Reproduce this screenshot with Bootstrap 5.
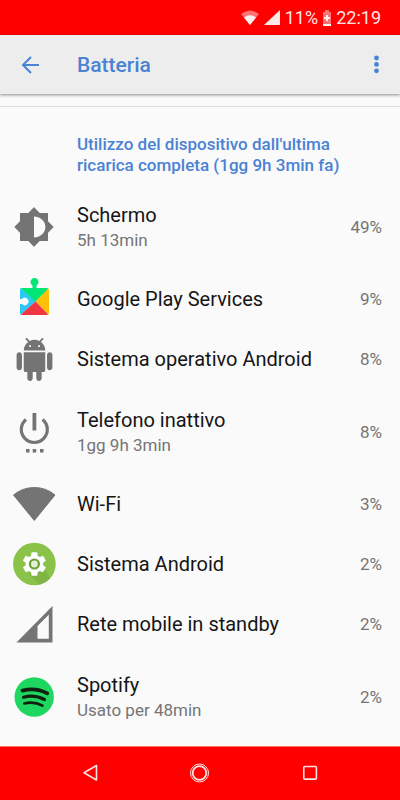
<!DOCTYPE html>
<html lang="it">
<head>
<meta charset="utf-8">
<meta name="viewport" content="width=device-width, initial-scale=1">
<title>Batteria</title>
<link href="https://cdn.jsdelivr.net/npm/bootstrap@5.3.0/dist/css/bootstrap.min.css" rel="stylesheet">
<style>
  body { font-family: Roboto, "Noto Sans", sans-serif; background: #fafafa; color: #151515; }
  svg { display: block; flex: none; }
  .status-bar { height: 35px; background: #f00; color: #ffe4e4; font-size: 18px; line-height: 20px; padding: 0 19px 0 0; }
  .app-bar { height: 59px; background: #ededed; padding: 1px 12px 0 18px; box-shadow: 0 1px 3px rgba(0,0,0,.45); color: #4a82d4; }
  .app-title { font-size: 21px; line-height: 28px; font-weight: 500; margin-left: 33px; }
  .icon-btn { padding: 0; border: 0; background: none; color: inherit; }
  .section-line { border-top: 1px solid #dcdcdc; margin-top: 12px; }
  .section-title { font-size: 17px; line-height: 21px; font-weight: 500; color: #4a82d4; padding: 27px 40px 8px 77px; }
  .usage-row { min-height: 60px; padding: 0 18px 0 12px; color: #151515; background: none; }
  .usage-row.two-line { min-height: 85px; }
  .icon-slot { width: 44px; height: 44px; margin-right: 21px; color: #747474; flex: none; }
  .usage-name { font-size: 20px; line-height: 26px; }
  .usage-info { font-size: 17px; line-height: 24px; color: #757575; }
  .usage-value { font-size: 17px; line-height: 22px; color: #757575; }
  .nav-keys { height: 54px; background: #f00; border-top: 1px solid #ff6b60; padding-bottom: 2px; color: #ffe0e0; gap: 66px; }
  .nav-key { width: 44px; height: 44px; }
</style>
<script src="https://cdn.jsdelivr.net/npm/bootstrap@5.3.0/dist/js/bootstrap.bundle.min.js" defer></script>
</head>
<body class="d-flex flex-column min-vh-100">

<div class="status-bar d-flex align-items-center justify-content-end">
  <svg width="18" height="15" viewBox="0 0 18 15" aria-hidden="true"><path d="M9 15L0 4Q9-3 18 4Z" fill="#ff7373"/><path d="M9 15L3 7.500Q9 3 15 7.500Z" fill="#fff0f0"/></svg>
  <svg class="ms-1" width="18" height="15" viewBox="0 0 18 15" aria-hidden="true"><path d="M1 15L17 0V15Z" fill="#ffe8e8"/></svg>
  <span class="ms-1">11%</span>
  <svg class="mx-1" width="10" height="16" viewBox="0 0 10 16" aria-hidden="true"><path d="M3 0H7V2H9V16H1V2H3Z" fill="#ff7070"/><path d="M1 14H9V16H1ZM4 5H6V7H8V9H6V11H4V9H2V7H4Z" fill="#fff0f0"/></svg>
  <span>22:19</span>
</div>

<header class="app-bar d-flex align-items-center">
  <button class="icon-btn" type="button" aria-label="Indietro">
    <svg width="26" height="26" viewBox="0 0 26 26" fill="none" stroke="currentColor" stroke-width="2"><path d="M21 13H5M13 5L5 13L13 21"/></svg>
  </button>
  <h1 class="app-title mb-0">Batteria</h1>
  <button class="icon-btn ms-auto" type="button" aria-label="Altre opzioni">
    <svg width="24" height="24" viewBox="0 0 24 24" fill="currentColor"><circle cx="12.500" cy="5" r="2.400"/><circle cx="12.500" cy="11.400" r="2.400"/><circle cx="12.500" cy="17.800" r="2.400"/></svg>
  </button>
</header>

<main>
  <div class="section-line"></div>
  <h2 class="section-title mb-0">Utilizzo del dispositivo dall'ultima ricarica completa (1gg 9h 3min fa)</h2>

  <div class="list-group list-group-flush">
    <a href="#" class="usage-row two-line list-group-item-action text-decoration-none d-flex align-items-center">
      <span class="icon-slot d-flex align-items-center justify-content-center">
        <svg width="42" height="42" viewBox="0 0 24 24" fill="currentColor" stroke="currentColor" stroke-width=".6" stroke-linejoin="round"><path d="M19.700 15.200L22.900 12 19.700 8.800V4.300h-4.500L12 1.100 8.800 4.300H4.300v4.500L1.100 12l3.200 3.200v4.500h4.500l3.200 3.200 3.200-3.200h4.500z"/><path d="M12 18V6c3.310 0 6.500 2.400 6.500 6s-3.190 6-6.500 6z" fill="#fafafa" stroke="none"/></svg>
      </span>
      <span class="flex-grow-1"><span class="usage-name d-block">Schermo</span><span class="usage-info d-block">5h 13min</span></span>
      <span class="usage-value">49%</span>
    </a>

    <a href="#" class="usage-row list-group-item-action text-decoration-none d-flex align-items-center">
      <span class="icon-slot">
        <svg width="44" height="44" viewBox="0 0 44 44">
          <path d="M20.500 12V8.500A4 4 0 1 1 24.500 8.500V12Z" fill="#00e676"/>
          <path d="M10 11H35Q36.500 11 36.500 12.500L23 25L8.500 11.500Z" fill="#00e676"/>
          <path d="M8.500 11.300L23.500 24.500L8.800 37.500Q8 37 8 36V27H10A3.700 3.700 0 1 0 10 22H8V12.500Z" fill="#29c8f5"/>
          <path d="M36.200 11.500L23.500 24.500L36.200 37.500Q37 37 37 36V12.500Z" fill="#ffc107"/>
          <path d="M23.500 24.500L8.800 37.500L10 38H35L36.200 37.500Z" fill="#f03543"/>
        </svg>
      </span>
      <span class="usage-name flex-grow-1">Google Play Services</span>
      <span class="usage-value">9%</span>
    </a>

    <a href="#" class="usage-row list-group-item-action text-decoration-none d-flex align-items-center">
      <span class="icon-slot d-flex align-items-center justify-content-center">
        <svg width="43" height="43" viewBox="0 0 24 24" fill="currentColor"><path d="M6 18c0 .55.45 1 1 1h1v3.500c0 .83.67 1.500 1.500 1.500s1.500-.67 1.500-1.500V19h2v3.500c0 .83.67 1.500 1.500 1.500s1.500-.67 1.500-1.500V19h1c.55 0 1-.45 1-1V8H6v10zM3.500 8C2.670 8 2 8.670 2 9.500v7c0 .83.67 1.500 1.500 1.500S5 17.330 5 16.500v-7C5 8.670 4.330 8 3.500 8zm17 0c-.83 0-1.500.67-1.500 1.500v7c0 .83.67 1.500 1.500 1.500s1.500-.67 1.500-1.500v-7c0-.83-.67-1.500-1.500-1.500zm-4.970-5.840l1.300-1.300c.2-.2.2-.51 0-.71-.2-.2-.51-.2-.71 0l-1.480 1.480C13.850 1.230 12.950 1 12 1c-.96 0-1.860.23-2.660.63L7.850.15c-.2-.2-.51-.2-.71 0-.2.2-.2.51 0 .71l1.310 1.310C6.970 3.260 6 5.010 6 7h12c0-1.990-.97-3.750-2.470-4.840zM10 5H9V4h1v1zm5 0h-1V4h1v1z"/></svg>
      </span>
      <span class="usage-name flex-grow-1">Sistema operativo Android</span>
      <span class="usage-value">8%</span>
    </a>

    <a href="#" class="usage-row two-line list-group-item-action text-decoration-none d-flex align-items-center">
      <span class="icon-slot">
        <svg width="44" height="44" viewBox="0 0 44 44" fill="none" stroke="currentColor"><path d="M14 9.500A13 13 0 1 0 30.600 9.500" stroke-width="3.200"/><path d="M22.400 3V20.500" stroke-width="3.800"/><path d="M14 40.700H17.500M20.700 40.700H24.200M28 40.700H31.500" stroke-width="3.500"/></svg>
      </span>
      <span class="flex-grow-1"><span class="usage-name d-block">Telefono inattivo</span><span class="usage-info d-block">1gg 9h 3min</span></span>
      <span class="usage-value">8%</span>
    </a>

    <a href="#" class="usage-row list-group-item-action text-decoration-none d-flex align-items-center">
      <span class="icon-slot">
        <svg width="44" height="44" viewBox="0 0 44 44" fill="currentColor" stroke="currentColor" stroke-linejoin="round"><path d="M22.300 38.500L1.500 13Q10.500 5.500 22.300 5.500T43 13Z"/></svg>
      </span>
      <span class="usage-name flex-grow-1">Wi-Fi</span>
      <span class="usage-value">3%</span>
    </a>

    <a href="#" class="usage-row list-group-item-action text-decoration-none d-flex align-items-center">
      <span class="icon-slot">
        <svg width="44" height="44" viewBox="0 0 44 44">
          <circle cx="22.400" cy="22" r="21.300" fill="#8bc34a"/>
          <path d="M31.500 25L38 36.500A21.300 21.300 0 0 1 28 42.500L17 32Z" fill="#7fb544"/>
          <path transform="translate(8.400 8) scale(1.167)" fill="#fff" d="M19.430 12.980c.04-.32.07-.64.07-.98s-.03-.66-.07-.98l2.110-1.650c.19-.15.24-.42.12-.64l-2-3.460c-.12-.22-.39-.3-.61-.22l-2.490 1c-.52-.4-1.080-.73-1.690-.98l-.38-2.650C14.460 2.180 14.250 2 14 2h-4c-.25 0-.46.18-.49.42l-.38 2.650c-.61.25-1.170.59-1.690.98l-2.490-1c-.23-.09-.49 0-.61.22l-2 3.460c-.13.22-.07.49.12.64l2.110 1.650c-.04.32-.07.65-.07.98s.03.66.07.98l-2.110 1.650c-.19.15-.24.42-.12.64l2 3.460c.12.22.39.3.61.22l2.490-1c.52.4 1.080.73 1.690.98l.38 2.650c.03.24.24.42.49.42h4c.25 0 .46-.18.49-.42l.38-2.650c.61-.25 1.170-.59 1.690-.98l2.490 1c.23.09.49 0 .61-.22l2-3.460c.12-.22.07-.49-.12-.64l-2.110-1.650z"/>
          <circle cx="22.400" cy="22" r="4.500" fill="#e3f0d3" stroke="#689f38" stroke-width="2.200"/>
        </svg>
      </span>
      <span class="usage-name flex-grow-1">Sistema Android</span>
      <span class="usage-value">2%</span>
    </a>

    <a href="#" class="usage-row list-group-item-action text-decoration-none d-flex align-items-center">
      <span class="icon-slot">
        <svg width="44" height="44" viewBox="0 0 44 44" fill="currentColor"><path fill-rule="evenodd" d="M4.500 40.500L40.500 4V40.500ZM25.500 24V36.800H36.800V12.800Z"/></svg>
      </span>
      <span class="usage-name flex-grow-1">Rete mobile in standby</span>
      <span class="usage-value">2%</span>
    </a>

    <a href="#" class="usage-row two-line list-group-item-action text-decoration-none d-flex align-items-center">
      <span class="icon-slot">
        <svg width="44" height="44" viewBox="0 0 44 44" fill="none" stroke="#10200f" stroke-linecap="round"><circle cx="22.200" cy="22" r="19.700" fill="#1ed760" stroke="none"/><path d="M10.500 15.600Q23.500 12 35.200 18.300" stroke-width="3.800"/><path d="M11.500 22.200Q22.500 19 32.500 24.500" stroke-width="3.200"/><path d="M12.300 28.500Q22 26 30.500 30.600" stroke-width="2.600"/></svg>
      </span>
      <span class="flex-grow-1"><span class="usage-name d-block">Spotify</span><span class="usage-info d-block">Usato per 48min</span></span>
      <span class="usage-value">2%</span>
    </a>
  </div>
</main>

<nav class="nav-keys d-flex align-items-center justify-content-center mt-auto" aria-label="Navigazione">
  <button class="icon-btn nav-key" type="button" aria-label="Indietro"><svg width="44" height="44" viewBox="0 0 44 44" fill="none" stroke="currentColor" stroke-width="1.600" stroke-linejoin="round"><path d="M28.500 14.500V29L16 21.800Z"/></svg></button>
  <button class="icon-btn nav-key" type="button" aria-label="Home"><svg width="44" height="44" viewBox="0 0 44 44" fill="none" stroke="currentColor"><circle cx="21.500" cy="22" r="9" stroke-width="1"/><circle cx="21.500" cy="22" r="6.800" stroke-width="1.800"/></svg></button>
  <button class="icon-btn nav-key" type="button" aria-label="App recenti"><svg width="44" height="44" viewBox="0 0 44 44" fill="none" stroke="currentColor" stroke-width="1.600"><rect x="15.800" y="15.500" width="12.600" height="12.600" rx=".8"/></svg></button>
</nav>
</body>
</html>
